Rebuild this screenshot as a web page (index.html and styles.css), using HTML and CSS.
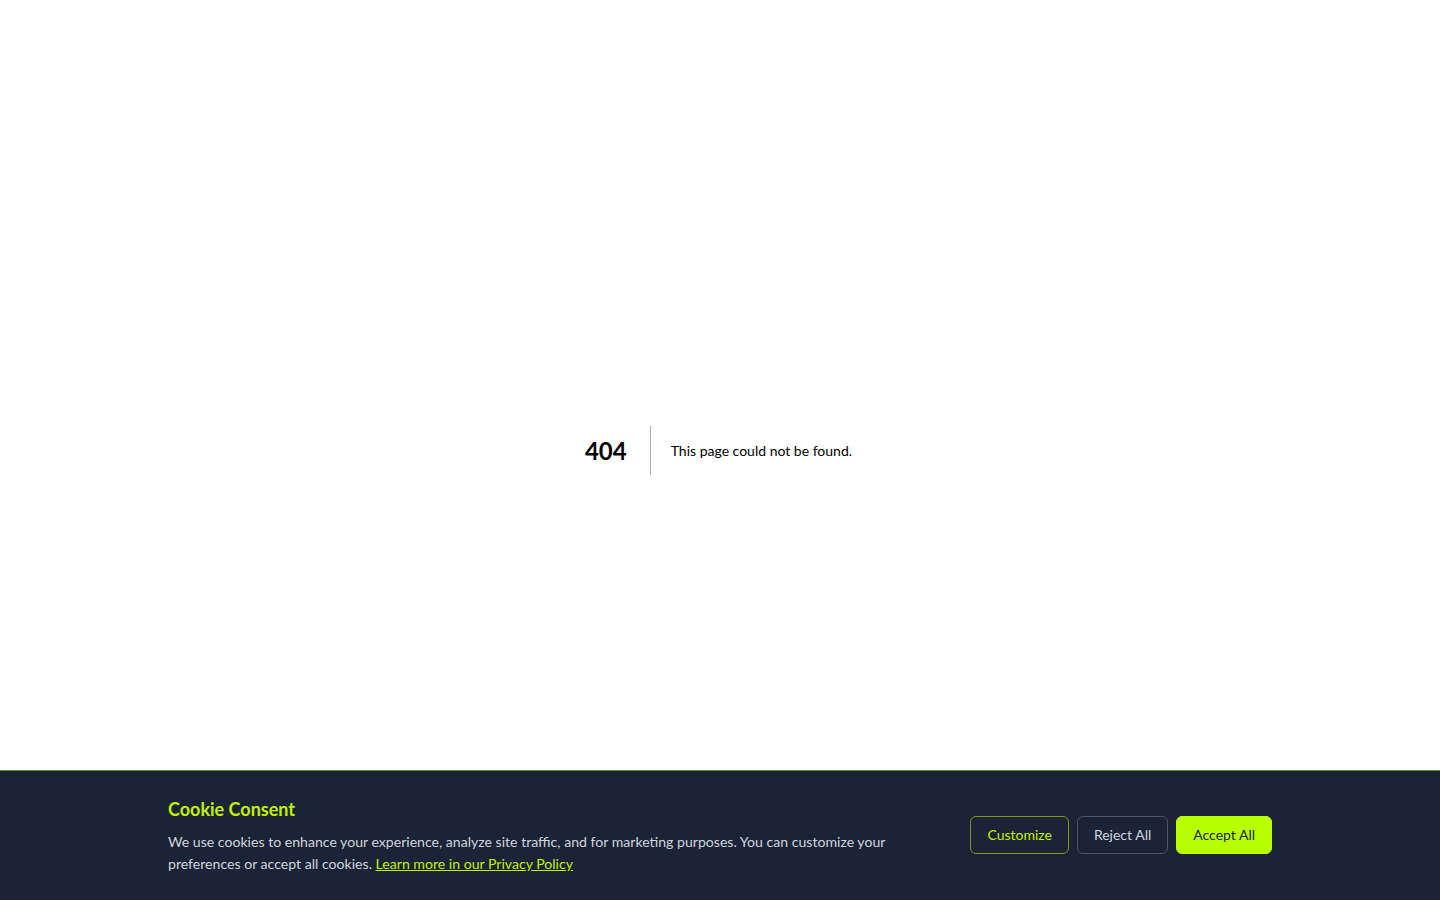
FILE: index.html
```html
<!DOCTYPE html>
<html lang="en">
<head>
<meta charset="utf-8">
<title>404: This page could not be found.</title>
<link rel="stylesheet" href="styles.css">
</head>
<body>
<main class="notfound">
  <div class="nf-row">
    <h1 class="nf-code">404</h1>
    <h2 class="nf-msg">This page could not be found.</h2>
  </div>
</main>
<section class="cookie">
  <div class="cookie-inner">
    <div class="cookie-text">
      <h3 class="cookie-title">Cookie Consent</h3>
      <p class="cookie-desc">We use cookies to enhance your experience, analyze site traffic, and for marketing purposes. You can customize your preferences or accept all cookies. <a href="#" class="cookie-link">Learn more in our Privacy Policy</a></p>
    </div>
    <div class="cookie-actions">
      <button class="btn btn-outline">Customize</button>
      <button class="btn btn-ghost">Reject All</button>
      <button class="btn btn-primary">Accept All</button>
    </div>
  </div>
</section>
</body>
</html>
```
FILE: styles.css
```css
html, body {
  margin: 0;
  padding: 0;
  background: #ffffff;
  font-family: Lato, "Noto Sans", sans-serif;
}

.notfound {
  height: 100vh;
  display: flex;
  align-items: center;
  justify-content: center;
  color: #000;
}

.nf-row {
  display: flex;
  align-items: center;
  margin-left: -3px;
}

.nf-code {
  margin: 0 20px 0 0;
  padding: 0 23px 0 0;
  font-size: 24px;
  font-weight: 700;
  line-height: 49px;
  border-right: 1px solid rgba(0, 0, 0, 0.3);
}

.nf-msg {
  margin: 0;
  font-size: 14px;
  font-weight: 400;
  line-height: 49px;
}

.cookie {
  position: fixed;
  left: 0;
  right: 0;
  bottom: 0;
  background: #1b2336;
  border-top: 1px solid rgba(190, 242, 0, 0.5);
}

.cookie-inner {
  max-width: 1104px;
  margin: 0 auto;
  padding: 24px 0 25px;
  display: flex;
  align-items: center;
  justify-content: space-between;
  gap: 32px;
}

.cookie-text {
  max-width: 770px;
}

.cookie-title {
  margin: 0 0 8px;
  font-size: 18px;
  line-height: 28px;
  font-weight: 700;
  color: #c1f000;
}

.cookie-desc {
  margin: 0;
  font-size: 14.1px;
  line-height: 22px;
  color: #d1d5db;
}

.cookie-link {
  color: #c1f000;
  text-decoration: underline;
}

.cookie-actions {
  display: flex;
  gap: 8px;
  flex-shrink: 0;
}

.btn {
  font-family: inherit;
  font-size: 14px;
  line-height: 20px;
  padding: 8px 16px;
  border-radius: 6px;
  cursor: pointer;
  background: transparent;
}

.btn-outline {
  color: #c1f000;
  border: 1px solid #7a9a12;
}

.btn-ghost {
  color: #d1d5db;
  border: 1px solid #4b5563;
}

.btn-primary {
  color: #1b2336;
  background: #b8ff00;
  border: 1px solid #b8ff00;
}
```
